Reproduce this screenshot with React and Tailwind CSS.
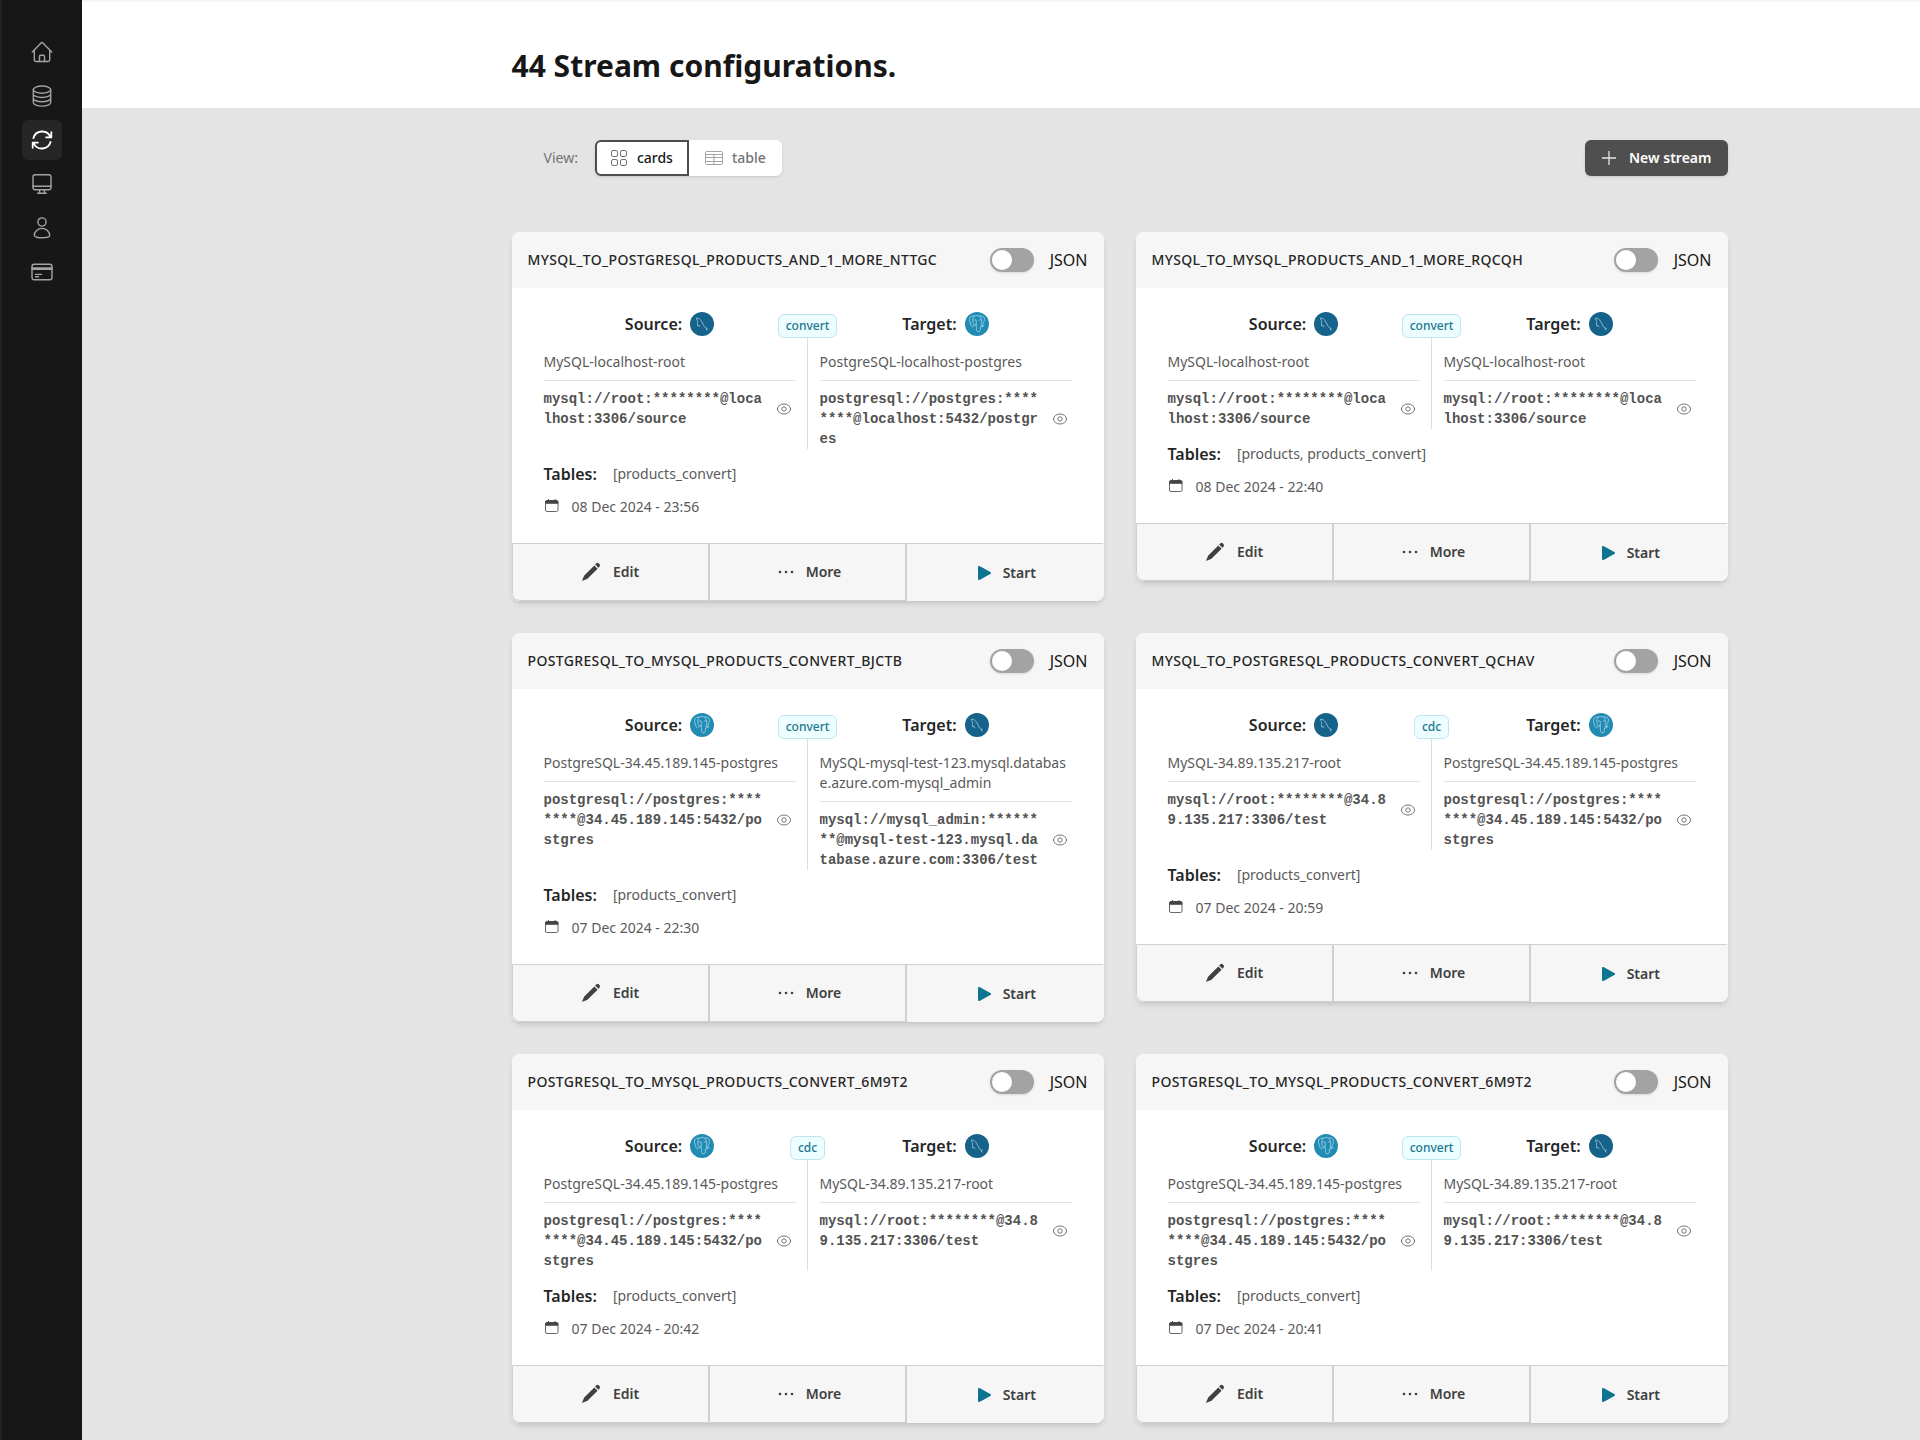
import React from "react";

const CARDS = [
  {
    name: "MYSQL_TO_POSTGRESQL_PRODUCTS_AND_1_MORE_NTTGC",
    mode: "convert",
    source: { kind: "mysql", name: "MySQL-localhost-root", url: "mysql://root:********@localhost:3306/source" },
    target: { kind: "postgres", name: "PostgreSQL-localhost-postgres", url: "postgresql://postgres:********@localhost:5432/postgres" },
    tables: "[products_convert]",
    date: "08 Dec 2024 - 23:56",
  },
  {
    name: "MYSQL_TO_MYSQL_PRODUCTS_AND_1_MORE_RQCQH",
    mode: "convert",
    source: { kind: "mysql", name: "MySQL-localhost-root", url: "mysql://root:********@localhost:3306/source" },
    target: { kind: "mysql", name: "MySQL-localhost-root", url: "mysql://root:********@localhost:3306/source" },
    tables: "[products, products_convert]",
    date: "08 Dec 2024 - 22:40",
  },
  {
    name: "POSTGRESQL_TO_MYSQL_PRODUCTS_CONVERT_BJCTB",
    mode: "convert",
    source: { kind: "postgres", name: "PostgreSQL-34.45.189.145-postgres", url: "postgresql://postgres:********@34.45.189.145:5432/postgres" },
    target: { kind: "mysql", name: "MySQL-mysql-test-123.mysql.database.azure.com-mysql_admin", url: "mysql://mysql_admin:********@mysql-test-123.mysql.database.azure.com:3306/test" },
    tables: "[products_convert]",
    date: "07 Dec 2024 - 22:30",
  },
  {
    name: "MYSQL_TO_POSTGRESQL_PRODUCTS_CONVERT_QCHAV",
    mode: "cdc",
    source: { kind: "mysql", name: "MySQL-34.89.135.217-root", url: "mysql://root:********@34.89.135.217:3306/test" },
    target: { kind: "postgres", name: "PostgreSQL-34.45.189.145-postgres", url: "postgresql://postgres:********@34.45.189.145:5432/postgres" },
    tables: "[products_convert]",
    date: "07 Dec 2024 - 20:59",
  },
  {
    name: "POSTGRESQL_TO_MYSQL_PRODUCTS_CONVERT_6M9T2",
    mode: "cdc",
    source: { kind: "postgres", name: "PostgreSQL-34.45.189.145-postgres", url: "postgresql://postgres:********@34.45.189.145:5432/postgres" },
    target: { kind: "mysql", name: "MySQL-34.89.135.217-root", url: "mysql://root:********@34.89.135.217:3306/test" },
    tables: "[products_convert]",
    date: "07 Dec 2024 - 20:42",
  },
  {
    name: "POSTGRESQL_TO_MYSQL_PRODUCTS_CONVERT_6M9T2",
    mode: "convert",
    source: { kind: "postgres", name: "PostgreSQL-34.45.189.145-postgres", url: "postgresql://postgres:********@34.45.189.145:5432/postgres" },
    target: { kind: "mysql", name: "MySQL-34.89.135.217-root", url: "mysql://root:********@34.89.135.217:3306/test" },
    tables: "[products_convert]",
    date: "07 Dec 2024 - 20:41",
  },
];

function Stroke({ children, className = "size-6", width = 1.4 }) {
  return (
    <svg
      viewBox="0 0 24 24"
      className={className}
      fill="none"
      stroke="currentColor"
      strokeWidth={width}
      strokeLinecap="round"
      strokeLinejoin="round"
      aria-hidden="true"
    >
      {children}
    </svg>
  );
}

const NAV = [
  {
    label: "Home",
    icon: (
      <Stroke>
        <path d="M2.3 11.9 11.3 2.8a1 1 0 0 1 1.4 0l9 9.1M4.3 10v9.8a1.700 1.700 0 0 0 1.700 1.700h12a1.700 1.700 0 0 0 1.700-1.700V10M9.500 21.300v-4.800a1.200 1.200 0 0 1 1.200-1.200h2.600a1.200 1.200 0 0 1 1.200 1.200v4.800" />
      </Stroke>
    ),
  },
  {
    label: "Connections",
    icon: (
      <Stroke>
        <ellipse cx="12" cy="5.6" rx="8.7" ry="3.6" />
        <path d="M3.3 5.6v12.900c0 2 3.900 3.600 8.700 3.600s8.700-1.600 8.700-3.600V5.600M3.300 9.900c0 2 3.900 3.600 8.700 3.600s8.700-1.600 8.700-3.600M3.300 14.200c0 2 3.900 3.600 8.700 3.600s8.700-1.600 8.700-3.600" />
      </Stroke>
    ),
  },
  {
    label: "Streams",
    active: true,
    icon: (
      <Stroke width={1.8}>
        <path d="M3.4 10.2A9 9 0 0 1 20.4 9M21.3 4.2v5.2h-5.2M20.6 13.8A9 9 0 0 1 3.6 15M2.7 19.8v-5.2h5.2" />
      </Stroke>
    ),
  },
  {
    label: "Console",
    icon: (
      <Stroke>
        <rect x="3" y="2.8" width="18" height="15" rx="2.2" />
        <path d="M3 14.2h18M9.6 18v3M14.4 18v3M7.6 21.2h8.8" />
      </Stroke>
    ),
  },
  {
    label: "Account",
    icon: (
      <Stroke>
        <circle cx="12" cy="6" r="4.1" />
        <path d="M4.3 19.6a7.7 7.2 0 0 1 15.4 0c0 2.9-15.4 2.9-15.4 0Z" />
      </Stroke>
    ),
  },
  {
    label: "Billing",
    icon: (
      <Stroke>
        <rect x="2" y="4.2" width="20" height="15.6" rx="2.2" />
        <path d="M2 8h20M2 9.2h20M5.5 14.4h6M5.5 16.8h3" />
      </Stroke>
    ),
  },
];

function MySqlLogo() {
  return (
    <svg viewBox="0 0 24 24" className="size-6 shrink-0" aria-label="MySQL" role="img">
      <circle cx="12" cy="12" r="12" fill="#15628a" />
      <path
        d="M6.6 6.3c1.2-.5 2.7.2 3.7 1.3 1.8 1.9 2.9 4.7 3.9 6.9.8.9 2.2 1 3.2 2.1l-1.5.2 1.2 1.4M6.6 6.3c-.3.9.9 1.9 1 3.1.2 1.5-.5 3.1.2 4.6.3.6.8 0 1-.8.5.6.7 1.3 1.2 1.7"
        fill="none"
        stroke="#a5c9dc"
        strokeWidth="0.8"
        strokeLinecap="round"
        strokeLinejoin="round"
      />
    </svg>
  );
}

function PostgresLogo() {
  return (
    <svg viewBox="0 0 24 24" className="size-6 shrink-0" aria-label="PostgreSQL" role="img">
      <circle cx="12" cy="12" r="12" fill="#218bb4" />
      <g fill="none" stroke="#a6d6e8" strokeWidth="0.8" strokeLinecap="round" strokeLinejoin="round">
        <path d="M9 4.200C6 3.400 4.300 5.200 4.600 8.100c.3 2.700 1.300 6.100 2.700 6.700.8.300 1.500-.9 2.100-1.700M9 4.200c2-.9 3.800-.8 5.600-.1 2.800-.8 5.200.7 4.800 3.700-.3 2.200-1.500 4.300-2.700 5.900M9 4.200C7.500 5.600 7.700 8 7.900 9.800c.1 1.300.3 2.500 1.500 3.300.6.4 1.300.2 1.700-.5" />
        <path d="M14.600 4.100c1.500 1.400 2.300 3.200 2 5.200-.2 1.500-.9 2.700.1 4.400 1 .3 1.800.1 2.400-.4-.7 1.200-2.200 1.700-3.500 1.500-.2 1.500 0 3.500-.9 4.500-.8.900-2.700.8-3.100-.6-.5-1.700.1-3.700-.5-6.100M8.900 8.100c.7-.5 1.700-.4 2.300.1.200 1.400.1 2.700-.1 4.100M14.100 8.100c.7-.4 1.400-.4 2.200-.1" />
      </g>
    </svg>
  );
}

function EyeIcon() {
  return (
    <svg viewBox="0 0 16 16" className="size-4" fill="none" stroke="currentColor" aria-hidden="true">
      <ellipse cx="8" cy="8" rx="6.5" ry="5" />
      <circle cx="8" cy="8" r="2.2" />
    </svg>
  );
}

function CalendarIcon() {
  return (
    <svg viewBox="0 0 16 16" className="size-4" aria-hidden="true">
      <rect x="1.500" y="1.500" width="12.500" height="11" rx="1.500" fill="none" stroke="#666" />
      <path d="M1.500 4.500V3A1.500 1.500 0 0 1 3 1.500h9.500A1.500 1.500 0 0 1 14 3v1.500Z" fill="#444" stroke="#444" strokeWidth="0.600" />
      <path d="M4.500 .5v1.500M11 .5v1.500" stroke="#444" strokeLinecap="round" />
    </svg>
  );
}

function PencilIcon() {
  return (
    <svg viewBox="0 0 20 20" className="size-5" fill="currentColor" aria-hidden="true">
      <path d="M13.300 3.400 16.600 6.700 6.700 16.400a2 2 0 0 1-.7.500L1.400 18.800a.2.200 0 0 1-.3-.3L3 14a2 2 0 0 1 .5-.7ZM14.100 2.600l.9-.9a2.200 2.200 0 0 1 3.200 0l.1.100a2.200 2.200 0 0 1 0 3.100l-.9.900Z" />
    </svg>
  );
}

function DotsIcon() {
  return (
    <svg viewBox="0 0 16 16" className="ml-1 size-4" fill="currentColor" aria-hidden="true">
      <circle cx="2" cy="8" r="1.3" />
      <circle cx="8" cy="8" r="1.3" />
      <circle cx="14" cy="8" r="1.3" />
    </svg>
  );
}

function PlayIcon() {
  return (
    <svg viewBox="-1 0 16 16" className="size-4 text-[#0e7490]" fill="currentColor" aria-hidden="true">
      <path d="M2 2.300C2 1.200 3 .7 4 1.200l10.300 5.700c1 .6 1 1.600 0 2.200L4 14.800c-1 .5-2 0-2-1.100Z" />
    </svg>
  );
}

function CardsIcon() {
  return (
    <svg viewBox="0 0 16 16" className="size-4" fill="none" stroke="currentColor" aria-hidden="true">
      <rect x="0.500" y="0.500" width="6" height="6" rx="1.500" />
      <rect x="9.500" y="0.500" width="6" height="6" rx="1.500" />
      <rect x="0.500" y="9.500" width="6" height="6" rx="1.500" />
      <rect x="9.500" y="9.500" width="6" height="6" rx="1.500" />
    </svg>
  );
}

function TableIcon() {
  return (
    <svg viewBox="0 0 18 16" className="h-4 w-[18px]" fill="none" stroke="currentColor" aria-hidden="true">
      <rect x="0.500" y="1.500" width="17" height="13" rx="1" />
      <path d="M.5 4.500h17M.5 7.500h17M.5 11.500h17M9 5v9.500" />
    </svg>
  );
}

function Endpoint({ title, data }) {
  return (
    <section className="min-w-0 flex-1">
      <div className="flex items-center justify-center gap-2">
        <h3 className="text-base font-semibold text-[#262626]">{title}</h3>
        {data.kind === "mysql" ? <MySqlLogo /> : <PostgresLogo />}
      </div>
      <p className="mt-4 border-b border-[#e2e2e2] pb-2 text-sm break-all text-[#5a5a5a]">{data.name}</p>
      <div className="flex items-center gap-1 pt-2">
        <p className="flex-1 font-['Liberation_Mono',monospace] text-sm font-bold break-all text-[#525252]">
          {data.url}
        </p>
        <button type="button" aria-label="Show connection string" className="p-1 text-[#737373]">
          <EyeIcon />
        </button>
      </div>
    </section>
  );
}

function StreamCard({ card, id }) {
  return (
    <article className="overflow-hidden rounded-lg bg-white shadow-md">
      <header className="flex h-14 items-center justify-between bg-[#f6f6f6] px-4">
        <h2 className="text-sm font-medium tracking-wide text-[#262626]">{card.name}</h2>
        <div className="flex items-center gap-4">
          <input
            id={id}
            type="checkbox"
            role="switch"
            className="h-6 w-11 appearance-none rounded-full bg-[#a3a3a3] p-0.5 shadow-sm before:block before:size-5 before:rounded-full before:bg-white before:content-[''] checked:bg-[#0e7490] checked:before:ml-5"
          />
          <label htmlFor={id} className="text-base text-[#171717]">JSON</label>
        </div>
      </header>
      <div className="px-8 pt-6 pb-[23px]">
        <div className="flex">
          <Endpoint title="Source:" data={card.source} />
          <div className="flex w-6 flex-col items-center pt-0.5">
            <span className="flex h-6 items-center rounded-md border border-[#bfe6ee] bg-[#ecfeff] px-[7px] text-xs font-medium whitespace-nowrap text-[#22758f]">
              {card.mode}
            </span>
            <span className="w-px flex-1 bg-[#dedede]" />
          </div>
          <Endpoint title="Target:" data={card.target} />
        </div>
        <div className="mt-[13px] flex items-center gap-4">
          <h3 className="text-base font-semibold text-[#262626]">Tables:</h3>
          <p className="text-sm text-[#5a5a5a]">{card.tables}</p>
        </div>
        <div className="mt-2 flex h-[26px] items-center gap-3 text-sm text-[#5a5a5a]">
          <CalendarIcon />
          <time>{card.date}</time>
        </div>
      </div>
      <footer className="grid grid-cols-3 bg-[#f6f6f6] text-sm font-semibold text-[#404040]">
        <button type="button" className="flex h-[58px] items-center justify-center gap-3 rounded-bl-lg border border-[#d0d0d0]">
          <PencilIcon />
          Edit
        </button>
        <button type="button" className="flex h-[58px] items-center justify-center gap-3 border border-[#d0d0d0]">
          <DotsIcon />
          More
        </button>
        <button type="button" className="flex h-[58px] items-center justify-center gap-3 border-t border-l border-[#d0d0d0]">
          <PlayIcon />
          Start
        </button>
      </footer>
    </article>
  );
}

export default function App() {
  return (
    <div className="flex min-h-screen bg-[#e4e4e4] font-['Noto_Sans',sans-serif]">
      <nav aria-label="Main" className="w-[82px] shrink-0 border-l-2 border-[#1f2126] bg-[#171717] pt-8">
        <ul className="flex flex-col items-center gap-1">
          {NAV.map((item) => (
            <li key={item.label}>
              <a
                href="#"
                aria-label={item.label}
                aria-current={item.active ? "page" : undefined}
                className={
                  item.active
                    ? "flex size-10 items-center justify-center rounded-md bg-[#262626] text-white"
                    : "flex size-10 items-center justify-center rounded-md text-[#a3a3a3]"
                }
              >
                {item.icon}
              </a>
            </li>
          ))}
        </ul>
      </nav>
      <main className="min-w-0 flex-1">
        <div className="border-t-2 border-[#f5f5f5] bg-white pt-11 pb-[22px] pl-[237px]">
          <h1 className="mx-auto max-w-[1216px] text-3xl leading-10 font-bold text-[#171717]">44 Stream configurations.</h1>
        </div>
        <div className="pt-8 pb-8 pl-[237px]">
          <div className="mx-auto max-w-[1216px]">
            <div className="flex items-center justify-between pl-8">
              <div className="flex items-center gap-[17px]">
                <span className="text-sm text-[#737373]">View:</span>
                <div className="flex rounded-md shadow-sm">
                  <button type="button" aria-pressed="true" className="flex h-9 items-center gap-2.5 rounded-l-md border-2 border-[#4d4d4d] bg-white px-3.5 text-sm font-medium text-[#171717]">
                    <span className="text-[#737373]"><CardsIcon /></span>
                    cards
                  </button>
                  <button type="button" aria-pressed="false" className="flex h-9 items-center gap-[9px] rounded-r-md bg-white px-4 text-sm font-medium text-[#737373]">
                    <span className="text-[#a3a3a3]"><TableIcon /></span>
                    table
                  </button>
                </div>
              </div>
              <button type="button" className="flex h-9 items-center gap-3 rounded-md bg-[#4f4f4f] px-4 text-sm font-semibold text-white shadow-sm">
                <svg viewBox="0 0 16 16" className="size-4 text-[#e5e5e5]" stroke="currentColor" strokeWidth="1.3" aria-hidden="true">
                  <path d="M8 1v14M1 8h14" />
                </svg>
                New stream
              </button>
            </div>
            <div className="mt-14 grid grid-cols-2 items-start gap-8">
              {CARDS.map((card, i) => (
                <StreamCard key={i} id={`json-${i}`} card={card} />
              ))}
            </div>
          </div>
        </div>
      </main>
    </div>
  );
}
